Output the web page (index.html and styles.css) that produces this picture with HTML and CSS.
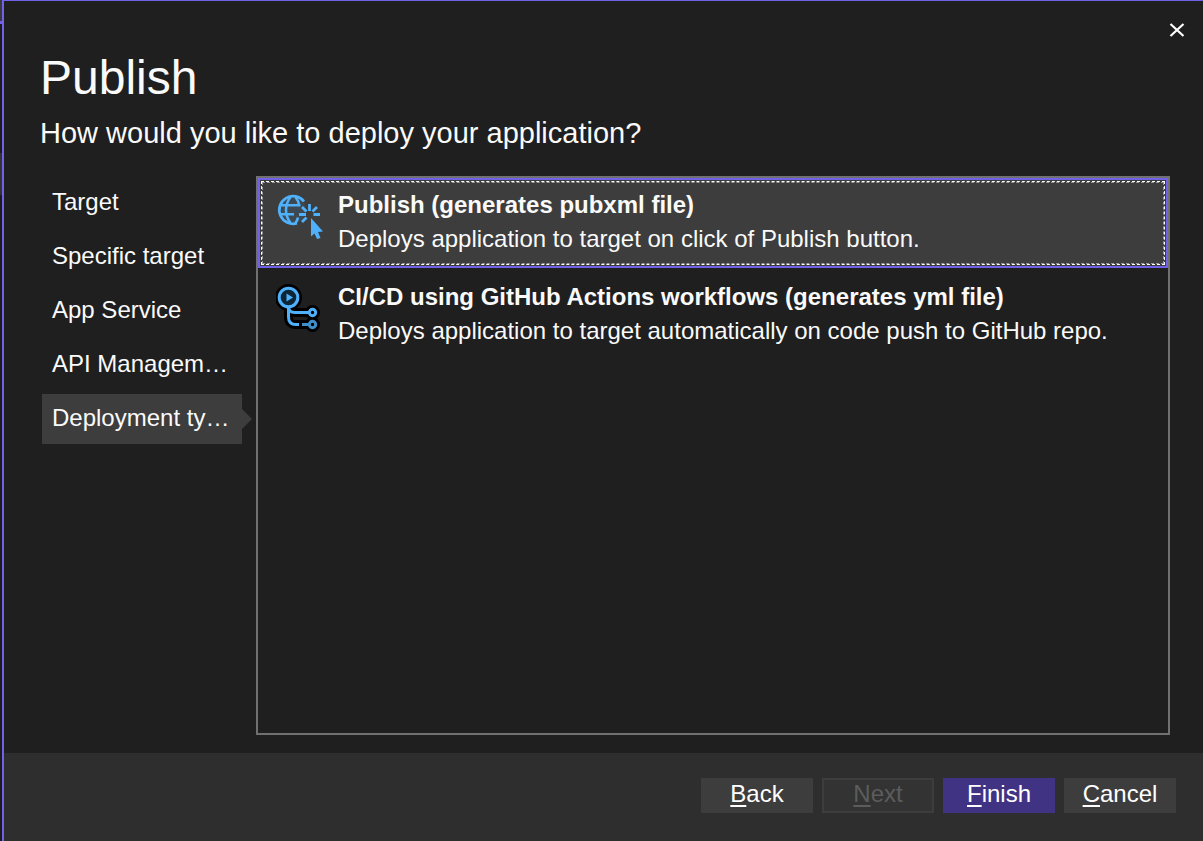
FILE: index.html
```html
<!DOCTYPE html>
<html lang="en">
<head>
<meta charset="utf-8">
<title>Publish</title>
<link rel="stylesheet" href="styles.css">
</head>
<body>
<div class="behind"></div>
<main class="dialog">
  <header class="head">
    <button class="close" type="button" aria-label="Close">
      <svg width="16" height="14" viewBox="0 0 16 14"><path d="M1.500 1L14.500 13M14.500 1L1.500 13" fill="none" stroke="#fff" stroke-width="2.200"/></svg>
    </button>
    <h1 class="title">Publish</h1>
    <p class="subtitle">How would you like to deploy your application?</p>
  </header>
  <div class="content">
    <nav class="steps">
      <a class="step" href="#target"><span class="step-text">Target</span></a>
      <a class="step" href="#specific"><span class="step-text">Specific target</span></a>
      <a class="step" href="#service"><span class="step-text">App Service</span></a>
      <a class="step" href="#api"><span class="step-text">API Managem…</span></a>
      <a class="step current" href="#deployment" aria-current="step"><span class="step-text">Deployment ty…</span></a>
    </nav>
    <div class="options" role="radiogroup" aria-label="Deployment type">
      <label class="option">
        <input class="pick" type="radio" name="deployment" checked>
        <span class="frame">
          <svg class="icon" width="48" height="48" viewBox="0 -1 48 48" fill="none" stroke="#4fb1fc">
            <circle cx="17" cy="17" r="13" fill="#4fb1fc" fill-opacity=".1" stroke="none"/>
            <path d="M28 8.500A13.800 13.800 0 1 0 21 30.200" stroke-width="2.800"/>
            <path d="M4.500 12.300H24.500M4.500 21.300H18M14.500 4C8.500 12 8.500 22 14.500 30M19.500 4C21.500 6.500 22.800 9.500 23.200 13M22 24.500C21.500 27 20.500 28.500 19.500 30" stroke-width="2.600"/>
            <path d="M33.500 11V18M26 14L30.500 18.500M41 14L36.500 18.500M23 21.500H30M37.500 21.500H44M26 29L30.500 24.500" stroke-width="2.800"/>
            <path d="M35 25L47 38.500L42 39L44.500 45L41 46L38.500 40.500L35 43.500Z" fill="#4fb1fc" stroke="none"/>
          </svg>
          <span class="copy"><strong class="name">Publish (generates pubxml file)</strong><span class="desc">Deploys application to target on click of Publish button.</span></span>
        </span>
      </label>
      <label class="option">
        <input class="pick" type="radio" name="deployment">
        <span class="frame">
          <svg class="icon" width="48" height="48" viewBox="0 0 48 48" fill="none">
            <g stroke="#000" stroke-linejoin="round">
              <circle cx="12.500" cy="13.500" r="11" stroke-width="5" fill="#000"/>
              <path d="M12.500 23V33Q12.500 40.500 20 40.500H37M12.500 23Q12.500 28.500 19 28.500H37" stroke-width="9"/>
              <circle cx="36.500" cy="28.500" r="5" stroke-width="5" fill="#000"/>
              <circle cx="36.500" cy="40.500" r="5" stroke-width="5" fill="#000"/>
            </g>
            <g stroke="#4fb1fc" stroke-width="3">
              <circle cx="12.500" cy="13.500" r="9.300" fill="#0d2536"/>
              <path d="M12.500 23V33Q12.500 40.500 20 40.500H23M12.500 23Q12.500 28.500 19 28.500H33"/>
              <circle cx="36.500" cy="28.500" r="3.200"/>
              <g stroke="#3f8fcb"><path d="M26 40.500H33"/><circle cx="36.500" cy="40.500" r="3.200"/></g>
            </g>
            <path d="M10.500 9.500L17 13.500L10.500 17.500Z" fill="#4fb1fc"/>
          </svg>
          <span class="copy"><strong class="name">CI/CD using GitHub Actions workflows (generates yml file)</strong><span class="desc">Deploys application to target automatically on code push to GitHub repo.</span></span>
        </span>
      </label>
    </div>
  </div>
  <footer class="foot">
    <button class="btn" type="button"><u>B</u>ack</button>
    <button class="btn" type="button" disabled><u>N</u>ext</button>
    <button class="btn primary" type="button"><u>F</u>inish</button>
    <button class="btn" type="button"><u>C</u>ancel</button>
  </footer>
</main>
</body>
</html>
```
FILE: styles.css
```css
* { box-sizing: border-box; }
body {
  margin: 0;
  min-height: 100vh;
  display: flex;
  background: #1f1f1f;
  color: #fafafa;
  font: 24px/34px "Liberation Sans", Arial, sans-serif;
}
.behind {
  width: 2px;
  background: linear-gradient(#3a3a3d 0 21px, #7160e8 21px 24px, #1c1c1c 24px 153px, #333 153px 195px, #1c1c1c 195px);
}
.dialog {
  flex: 1;
  min-width: 0;
  display: flex;
  flex-direction: column;
  border-left: 2px solid #7160e8;
  border-top: 1px solid #7160e8;
}
.head { position: relative; padding: 49px 36px 0; }
.close {
  position: absolute;
  top: 15px;
  right: 12px;
  width: 28px;
  height: 28px;
  padding: 0;
  border: 0;
  background: none;
  display: grid;
  place-items: center;
}
.title { margin: 0; font-size: 48px; line-height: 56px; font-weight: 400; }
.subtitle { margin: 10px 0 0; font-size: 29px; line-height: 34px; }
.content { flex: 1; display: flex; gap: 14px; padding: 26px 33px 18px 38px; }
.steps { width: 200px; padding-top: 2px; display: flex; flex-direction: column; gap: 4px; }
.step { position: relative; height: 50px; padding: 7px 10px; color: inherit; text-decoration: none; white-space: nowrap; }
.step-text { display: block; }
.current { background: #3d3d3d; }
.current::after {
  content: "";
  position: absolute;
  left: 100%;
  top: 15px;
  border: 10px solid transparent;
  border-right: 0;
  border-left-color: #3d3d3d;
}
.options { flex: 1; min-width: 0; border: 2px solid #707070; display: flex; flex-direction: column; gap: 2px; }
.option { position: relative; }
.pick { position: absolute; opacity: 0; margin: 0; }
.frame { position: relative; display: flex; gap: 14px; min-height: 90px; padding: 8px 12px 8px 16px; border: 2px solid transparent; }
.pick:checked + .frame { background: #3d3d3d; border-color: #7160e8; }
.pick:checked + .frame::after {
  content: "";
  position: absolute;
  inset: 1px;
  border: 1px dashed #fff;
  outline: 1px dashed #999;
  outline-offset: -2px;
}
.icon { flex: none; margin-top: 4px; }
.copy { min-width: 0; }
.name, .desc { display: block; }
.foot { display: flex; justify-content: flex-end; gap: 9px; padding: 25px 27px 28px; background: #2e2e2e; }
.btn {
  width: 112px;
  height: 35px;
  padding: 0 0 3px;
  border: 2px solid #3d3d3d;
  background: #3d3d3d;
  color: #fff;
  font: inherit;
  line-height: 28px;
}
.btn u { text-decoration-thickness: 2px; text-underline-offset: 3px; }
.btn:disabled { background: #333; color: #5c5c5c; }
.primary { background: #413383; border-color: #413383; }
```
